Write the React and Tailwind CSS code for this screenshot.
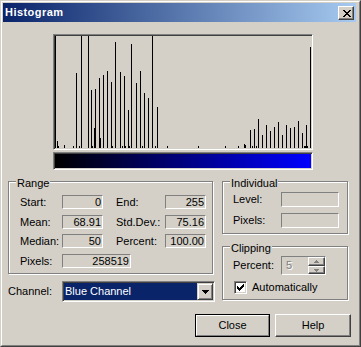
import React from 'react'

// histogram bars: [screen x, top y] taken from the 256px wide plot (x 55 = level 0)
const BARS = [
  [55, 36], [57, 141], [58, 146], [64, 145], [73, 146], [76, 73], [79, 146],
  [81, 36], [88, 36], [91, 90], [92, 146], [94, 128], [95, 89], [99, 78],
  [100, 138], [103, 75], [107, 71], [111, 82], [112, 146], [115, 42],
  [120, 72], [122, 146], [124, 76], [125, 146], [128, 110], [129, 146],
  [131, 44], [136, 83], [140, 71], [142, 146], [144, 93], [148, 98],
  [152, 36], [155, 146], [157, 107], [167, 146], [198, 146], [225, 146],
  [238, 146], [244, 144], [245, 145], [250, 130], [252, 146], [254, 129],
  [256, 146], [258, 119], [262, 135], [266, 125], [270, 131], [274, 127],
  [278, 122], [282, 135], [286, 125], [290, 128], [294, 127], [298, 121],
  [302, 133], [304, 146], [305, 146], [306, 125], [307, 146], [310, 47],
]

const CLOSE_X = ['11000011', '01100110', '00111100', '00011000', '00111100', '01100110', '11000011']
const CHECK = ['0000001', '0000011', '1000111', '1101110', '1111100', '0111000', '0010000']
const ARROW_DOWN = ['1111111', '0111110', '0011100', '0001000']
const SPIN_UP = ['00100', '01110', '11111']
const SPIN_DOWN = ['11111', '01110', '00100']

const sunken = 'border border-t-[#808080] border-l-[#808080] border-r-white border-b-white'
const sunkenDeep = `${sunken} p-px shadow-[inset_1px_1px_0_#404040,inset_-1px_-1px_0_#d4d0c8]`
const raised = 'border border-t-white border-l-white border-r-[#404040] border-b-[#404040] shadow-[inset_-1px_-1px_0_#808080] bg-[#d4d0c8]'
const etched = 'border border-[#808080] shadow-[inset_1px_1px_0_#fff,1px_1px_0_#fff]'

function Pixels({ rows, color = '#000' }) {
  const w = rows[0].length
  const h = rows.length
  return (
    <svg width={w} height={h} viewBox={`0 0 ${w} ${h}`} shapeRendering="crispEdges" className="block">
      {rows.flatMap((row, y) =>
        row.split('').map((c, x) => (c === '1' ? <rect key={`${x}-${y}`} x={x} y={y} width="1" height="1" fill={color} /> : null))
      )}
    </svg>
  )
}

function Legend({ children }) {
  return <div className="-mt-[5px] ml-[7px] w-fit px-px bg-[#d4d0c8] leading-[13px]">{children}</div>
}

function Field({ w, h = 14, value }) {
  return (
    <div className={`${sunken} text-right pr-px`} style={{ width: w, height: h, lineHeight: `${h - 2}px` }}>
      {value}
    </div>
  )
}

function RangeRow({ label, value, label2, value2, className = '' }) {
  return (
    <div className={`flex items-center ml-[11px] ${className}`}>
      <span className="w-[42px]">{label}</span>
      <Field w={value2 === undefined ? 69 : 41} value={value} />
      {label2 && (
        <>
          <span className="ml-[13px] w-[49px]">{label2}</span>
          <Field w={41} value={value2} />
        </>
      )}
    </div>
  )
}

export default function App() {
  return (
    <div className="w-[361px] h-[347px] bg-[#d4d0c8] border border-t-[#d4d0c8] border-l-[#d4d0c8] border-r-[#404040] border-b-[#404040] font-['Liberation_Sans',Arial,sans-serif] text-[11px] leading-[13px] text-black select-none">
      <div className="h-full border border-t-white border-l-white border-r-[#808080] border-b-[#808080] pl-px pt-px pr-[3px]">
        {/* Title bar */}
        <div className="h-[19px] flex items-start bg-[linear-gradient(to_right,#0a246a,#a6caf0)]">
          <span className="pl-[2px] leading-[19px] font-bold tracking-[0.45px] text-white">Histogram</span>
          <div className={`ml-auto mt-[3px] mr-[2px] w-[16px] h-[14px] ${raised} flex items-center justify-center pl-px`}>
            <Pixels rows={CLOSE_X} />
          </div>
        </div>

        <div className="flex flex-col">
          {/* Histogram plot */}
          <div className={`ml-[50px] mt-[12px] w-[260px] h-[116px] ${sunkenDeep}`}>
            <svg width="256" height="112" viewBox="0 0 256 112" shapeRendering="crispEdges" className="block">
              {BARS.map(([x, top]) => (
                <rect key={x} x={x - 55} y={top - 36} width="1" height={148 - top} fill="#000" />
              ))}
            </svg>
          </div>

          {/* Channel gradient */}
          <div className={`ml-[50px] mt-[2px] w-[260px] h-[18px] ${sunkenDeep}`}>
            <div className="h-full bg-[linear-gradient(to_right,#000000,#0000ff)]" />
          </div>

          <div className="flex mt-[11px]">
            {/* Left column */}
            <div className="ml-[5px] w-[207px]">
              <div className={`w-[205px] h-[93px] ${etched}`}>
                <Legend>Range</Legend>
                <RangeRow className="mt-[5px]" label="Start:" value="0" label2="End:" value2="255" />
                <RangeRow className="mt-[6px]" label="Mean:" value="68.91" label2="Std.Dev.:" value2="75.16" />
                <RangeRow className="mt-[5px]" label="Median:" value="50" label2="Percent:" value2="100.00" />
                <RangeRow className="mt-[6px]" label="Pixels:" value="258519" />
              </div>

              <div className="flex items-center mt-[7px]">
                <span className="w-[54px]">Channel:</span>
                <div className={`w-[153px] h-[21px] ${sunkenDeep} flex`}>
                  <div className="flex-1 bg-[#0a246a] text-white pl-px leading-[17px]">Blue Channel</div>
                  <div className="w-[16px] h-full border border-t-[#d4d0c8] border-l-[#d4d0c8] border-r-[#404040] border-b-[#404040] shadow-[inset_1px_1px_0_#fff,inset_-1px_-1px_0_#808080] bg-[#d4d0c8] flex items-center justify-center">
                    <Pixels rows={ARROW_DOWN} />
                  </div>
                </div>
              </div>
            </div>

            {/* Right column */}
            <div className="ml-[7px] w-[127px]">
              <div className={`w-[126px] h-[53px] ${etched}`}>
                <Legend>Individual</Legend>
                <div className="flex items-center ml-[10px] mt-[2px]">
                  <span className="w-[48px]">Level:</span>
                  <Field w={58} h={15} value="" />
                </div>
                <div className="flex items-center ml-[10px] mt-[6px]">
                  <span className="w-[48px]">Pixels:</span>
                  <Field w={58} h={15} value="" />
                </div>
              </div>

              <div className={`mt-[12px] w-[126px] h-[54px] ${etched}`}>
                <Legend>Clipping</Legend>
                <div className="flex items-center ml-[10px] mt-px">
                  <span className="w-[48px]">Percent:</span>
                  <div className={`w-[45px] h-[19px] ${sunken} flex`}>
                    <span className="flex-1 pl-[4px] leading-[17px] text-[#808080] [text-shadow:1px_1px_0_#fff]">5</span>
                    <div className="w-[17px] flex flex-col">
                      <div className={`h-[9px] ${raised} flex items-center justify-center`}>
                        <Pixels rows={SPIN_UP} color="#808080" />
                      </div>
                      <div className={`h-[8px] ${raised} flex items-center justify-center`}>
                        <Pixels rows={SPIN_DOWN} color="#808080" />
                      </div>
                    </div>
                  </div>
                </div>
                <div className="flex items-center ml-[11px] mt-[6px]">
                  <div className={`w-[13px] h-[13px] ${sunkenDeep} bg-white flex items-center justify-center`}>
                    <Pixels rows={CHECK} />
                  </div>
                  <span className="ml-[5px]">Automatically</span>
                </div>
              </div>
            </div>
          </div>

          {/* Buttons */}
          <div className="flex mt-[12px] ml-[192px]">
            <div className="w-[75px] h-[23px] border border-black">
              <div className="h-full border border-t-white border-l-white border-r-[#808080] border-b-[#808080] flex items-center justify-center">
                Close
              </div>
            </div>
            <div className={`ml-[5px] w-[76px] h-[23px] ${raised} flex items-center justify-center`}>Help</div>
          </div>
        </div>
      </div>
    </div>
  )
}
